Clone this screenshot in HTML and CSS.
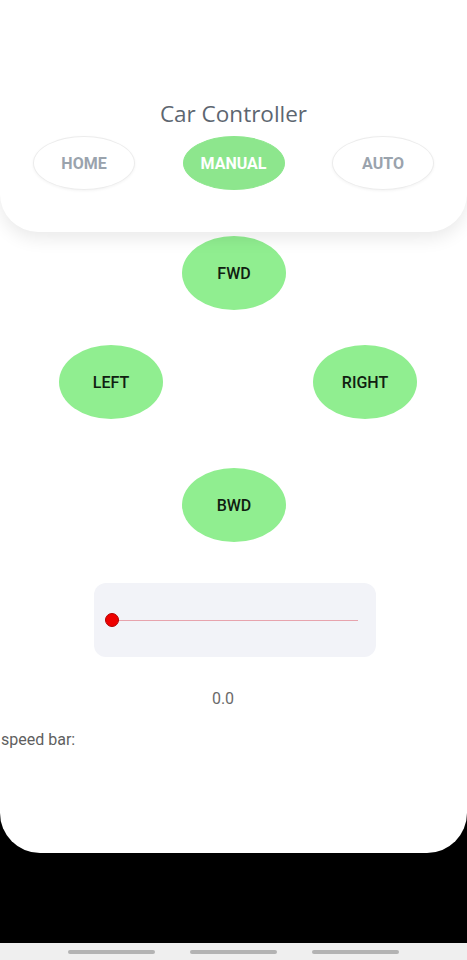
FILE: index.html
```html
<!DOCTYPE html>
<html>
<head>
<meta charset="utf-8">
<link rel="stylesheet" href="styles.css">
</head>
<body>
<div class="screen">
  <header class="header">
    <h1 class="title">Car Controller</h1>
    <nav class="tabs">
      <div class="tab">HOME</div>
      <div class="tab active">MANUAL</div>
      <div class="tab">AUTO</div>
    </nav>
  </header>
  <main class="content">
    <div class="pad">
      <div class="row center"><div class="btn">FWD</div></div>
      <div class="row sides"><div class="btn">LEFT</div><div class="btn">RIGHT</div></div>
      <div class="row center bwd"><div class="btn">BWD</div></div>
    </div>
    <div class="slider-box">
      <div class="track"><div class="thumb"></div></div>
    </div>
    <div class="value">0.0</div>
    <div class="label">speed bar:</div>
  </main>
</div>
<div class="navbar">
  <span class="pill"></span><span class="pill"></span><span class="pill"></span>
</div>
</body>
</html>
```
FILE: styles.css
```css
html, body {
  margin: 0;
  padding: 0;
}
body {
  width: 467px;
  height: 960px;
  background: #000;
  font-family: Roboto, "Noto Sans", sans-serif;
  overflow: hidden;
}
.screen {
  height: 853px;
  background: #fff;
  border-radius: 0 0 40px 40px;
  overflow: hidden;
}
.header {
  position: relative;
  z-index: 1;
  height: 232px;
  box-sizing: border-box;
  padding-top: 99px;
  background: #fff;
  border-radius: 0 0 38px 38px;
  box-shadow: 0 6px 18px rgba(0, 0, 0, 0.09);
}
.title {
  margin: 0;
  text-align: center;
  font-family: "Open Sans", sans-serif;
  font-weight: 400;
  font-size: 22.5px;
  line-height: 30px;
  color: #5d6670;
}
.tabs {
  display: flex;
  justify-content: space-between;
  padding: 0 33px;
  margin-top: 7px;
}
.tab {
  width: 102px;
  height: 54px;
  border-radius: 50%;
  box-sizing: border-box;
  border: 1px solid #ececec;
  box-shadow: 0 1px 3px rgba(0, 0, 0, 0.05);
  display: flex;
  align-items: center;
  justify-content: center;
  font-family: Roboto, sans-serif;
  font-weight: 700;
  font-size: 16px;
  color: #9aa3ad;
  background: #fff;
}
.tab.active {
  background: #8de68d;
  border-color: #8de68d;
  color: #fff;
  box-shadow: none;
}
.content {
  padding-top: 4px;
}
.row {
  display: flex;
}
.row.center {
  justify-content: center;
  padding-left: 1px;
}
.row.sides {
  justify-content: space-between;
  padding: 0 50px 0 59px;
  margin-top: 35px;
}
.row.bwd {
  margin-top: 49px;
}
.btn {
  width: 104px;
  height: 74px;
  border-radius: 50%;
  background: #90ee90;
  display: flex;
  align-items: center;
  justify-content: center;
  font-weight: 500;
  font-size: 16px;
  color: #102010;
}
.slider-box {
  width: 282px;
  height: 74px;
  margin: 41px 0 0 94px;
  background: #f2f3f8;
  border-radius: 12px;
  display: flex;
  align-items: center;
  box-sizing: border-box;
  padding: 0 18px 0 18px;
}
.track {
  position: relative;
  flex: 1;
  height: 1px;
  background: #e7a3ad;
}
.thumb {
  position: absolute;
  left: -7px;
  top: -7px;
  width: 12px;
  height: 12px;
  border-radius: 50%;
  background: #ee0000;
  border: 1px solid #b30000;
}
.value {
  margin-top: 32px;
  width: 446px;
  text-align: center;
  font-size: 16px;
  line-height: 20px;
  color: #6a6a6a;
}
.label {
  margin-top: 21px;
  padding-left: 1px;
  font-size: 16px;
  line-height: 20px;
  color: #5f5f5f;
}
.navbar {
  margin-top: 90px;
  height: 17px;
  background: #efefef;
  display: flex;
  align-items: center;
  padding-left: 68px;
  gap: 35px;
}
.pill {
  width: 87px;
  height: 4px;
  border-radius: 2px;
  background: #b3b3b3;
}
```
